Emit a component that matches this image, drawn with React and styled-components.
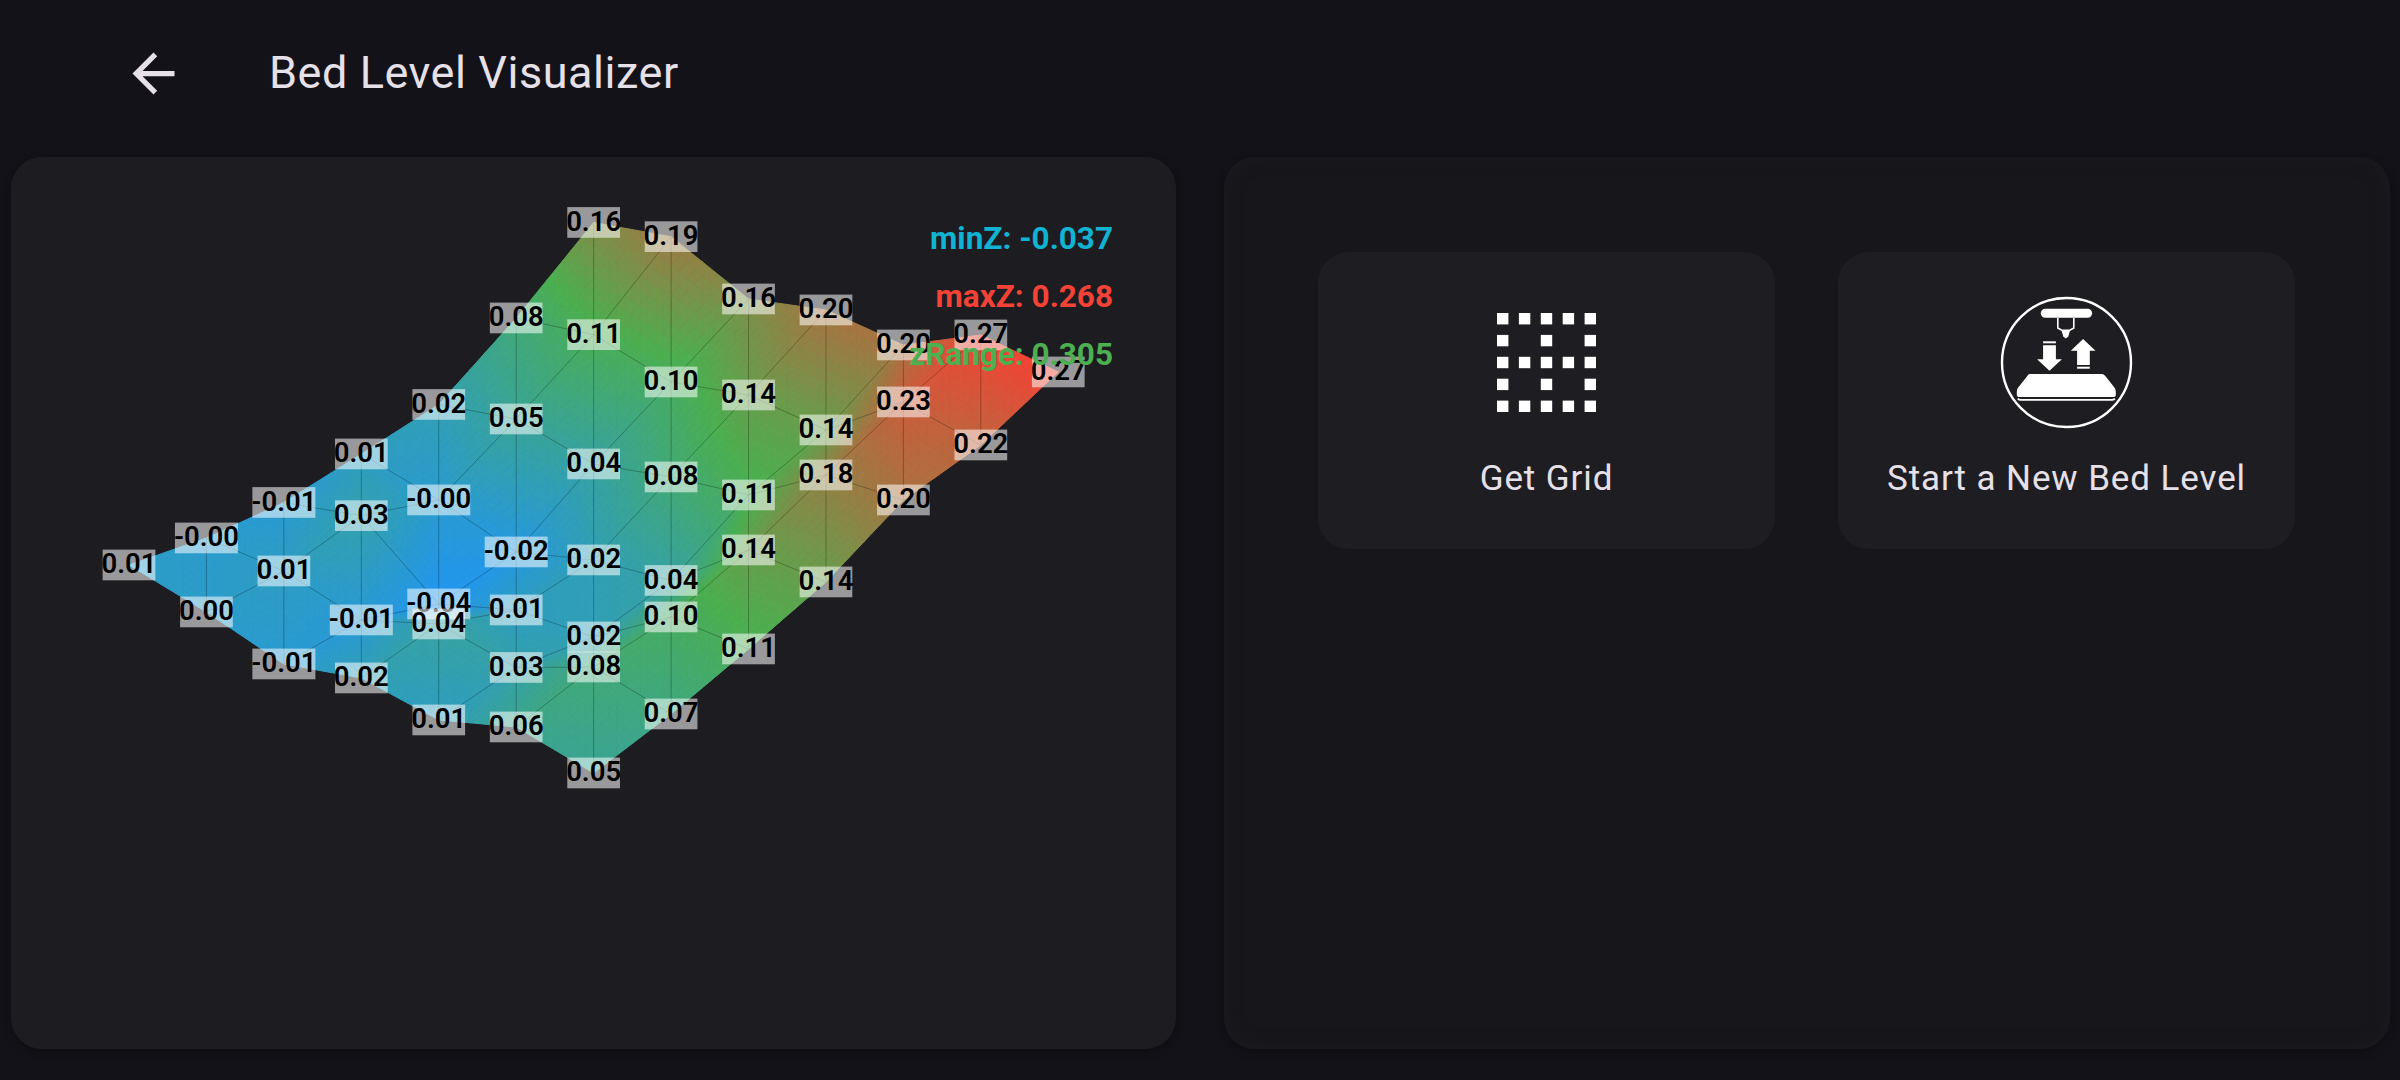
import React from 'react'
import styled, { createGlobalStyle } from 'styled-components'

const GlobalStyle = createGlobalStyle`
  html, body {
    margin: 0;
    padding: 0;
    background: #131218;
  }
`

// mesh labels per screen column, top to bottom: [y, z, label]
const COL_X0 = 129
const COL_STEP = 77.44
const COLUMNS = [
  [[565, 0.006, '0.01']],
  [[538, -0.002, '-0.00'], [612, 0.002, '0.00']],
  [[502.5, -0.008, '-0.01'], [571, 0.008, '0.01'], [664, -0.006, '-0.01']],
  [[454, 0.01, '0.01'], [515.7, 0.03, '0.03'], [620, -0.01, '-0.01'], [678, 0.02, '0.02']],
  [[404.5, 0.02, '0.02'], [500, -0.004, '-0.00'], [604, -0.037, '-0.04'], [624, 0.04, '0.04'], [720, 0.01, '0.01']],
  [[318, 0.08, '0.08'], [419, 0.05, '0.05'], [552, -0.02, '-0.02'], [610, 0.01, '0.01'], [667.5, 0.03, '0.03'], [727, 0.06, '0.06']],
  [[222.5, 0.164, '0.16'], [334.7, 0.11, '0.11'], [464, 0.04, '0.04'], [560, 0.02, '0.02'], [637, 0.02, '0.02'], [667, 0.08, '0.08'], [773, 0.05, '0.05']],
  [[236.7, 0.19, '0.19'], [382, 0.1, '0.10'], [477, 0.08, '0.08'], [580.5, 0.04, '0.04'], [617, 0.1, '0.10'], [714, 0.07, '0.07']],
  [[299, 0.16, '0.16'], [395, 0.14, '0.14'], [495, 0.11, '0.11'], [550, 0.14, '0.14'], [649, 0.11, '0.11']],
  [[310, 0.2, '0.20'], [430, 0.14, '0.14'], [475, 0.18, '0.18'], [582, 0.14, '0.14']],
  [[345, 0.2, '0.20'], [402, 0.23, '0.23'], [500, 0.2, '0.20']],
  [[335, 0.266, '0.27'], [445, 0.22, '0.22']],
  [[372, 0.268, '0.27']],
]

const MIN_Z = -0.037
const MAX_Z = 0.268
const BLUE = [33, 150, 243]
const GREEN = [76, 175, 80]
const RED = [244, 67, 54]

const mix = (a, b, t) => a.map((v, i) => v + (b[i] - v) * t)

const zColor = (z) => {
  const t = Math.min(1, Math.max(0, (z - MIN_Z) / (MAX_Z - MIN_Z)))
  const c = t < 0.5 ? mix(BLUE, GREEN, t * 2) : mix(GREEN, RED, (t - 0.5) * 2)
  return `rgb(${c.map(Math.round).join(',')})`
}

// a goes up-right, b goes down-right
const grid = Array.from({ length: 7 }, () => [])
const labels = []
COLUMNS.forEach((col, c) => {
  col.forEach(([y, z, text], k) => {
    const b = k + Math.max(0, c - 6)
    const a = c - b
    const point = { x: COL_X0 + COL_STEP * c, y, z, text }
    grid[a][b] = point
    labels.push(point)
  })
})

const SUBDIV = 10

const shadeTriangle = (p, q, r) => {
  const at = (i, j) => {
    const u = i / SUBDIV
    const v = j / SUBDIV
    const w = 1 - u - v
    return {
      x: p.x * w + q.x * u + r.x * v,
      y: p.y * w + q.y * u + r.y * v,
      z: p.z * w + q.z * u + r.z * v,
    }
  }
  const out = []
  const push = (s1, s2, s3) => {
    out.push({
      points: [s1, s2, s3].map((s) => `${s.x.toFixed(1)},${s.y.toFixed(1)}`).join(' '),
      color: zColor((s1.z + s2.z + s3.z) / 3),
    })
  }
  for (let i = 0; i < SUBDIV; i++) {
    for (let j = 0; j < SUBDIV - i; j++) {
      push(at(i, j), at(i + 1, j), at(i, j + 1))
      if (i + j < SUBDIV - 1) push(at(i + 1, j), at(i + 1, j + 1), at(i, j + 1))
    }
  }
  return out
}

const facets = []
const edges = []
for (let a = 0; a < 7; a++) {
  for (let b = 0; b < 7; b++) {
    // the outline of the mesh has no visible line
    if (a < 6 && b > 0 && b < 6) edges.push([grid[a][b], grid[a + 1][b]])
    if (b < 6 && a > 0 && a < 6) edges.push([grid[a][b], grid[a][b + 1]])
    if (a < 6 && b < 6) {
      edges.push([grid[a + 1][b], grid[a][b + 1]])
      facets.push(...shadeTriangle(grid[a][b], grid[a + 1][b], grid[a][b + 1]))
      facets.push(...shadeTriangle(grid[a + 1][b + 1], grid[a + 1][b], grid[a][b + 1]))
    }
  }
}

const BedMesh = () => (
  <MeshSvg viewBox="11 157 1165 892">
    {facets.map((f, i) => (
      <polygon key={i} points={f.points} fill={f.color} stroke={f.color} strokeWidth="1" />
    ))}
    {edges.map(([p, q], i) => (
      <line key={i} x1={p.x} y1={p.y} x2={q.x} y2={q.y} stroke="rgba(0,0,0,0.25)" strokeWidth="1" />
    ))}
    {labels.map((l, i) => {
      const w = l.text.startsWith('-') ? 63 : 52.7
      return (
        <g key={i}>
          <rect x={l.x - w / 2} y={l.y - 15.4} width={w} height={30.7} fill="rgba(255,255,255,0.55)" />
          <MeshLabel x={l.x} y={l.y + 8} textAnchor="middle">{l.text}</MeshLabel>
        </g>
      )
    })}
  </MeshSvg>
)

const GRID_DOTS = [
  [1, 1, 1, 1, 1],
  [1, 0, 1, 0, 1],
  [1, 1, 1, 1, 1],
  [1, 0, 1, 0, 1],
  [1, 1, 1, 1, 1],
]

const GridIcon = () => (
  <svg width="99" height="99" viewBox="0 0 99 99">
    {GRID_DOTS.map((row, r) =>
      row.map((on, c) =>
        on ? <rect key={`${r}-${c}`} x={c * 21.9} y={r * 21.9} width="11.4" height="11.4" fill="#fff" /> : null
      )
    )}
  </svg>
)

const PrinterIcon = () => (
  <svg width="135" height="135" viewBox="39.2 15 135 135" fill="#fff">
    <circle cx="106.7" cy="82.5" r="64.5" fill="none" stroke="#fff" strokeWidth="2.4" />
    <rect x="81" y="28.7" width="51.3" height="9" rx="4.5" />
    <path d="M98 38v10l4 2.2h8l4-2.2V38" fill="none" stroke="#fff" strokeWidth="1.6" />
    <path d="M101.7 50.5h8.6l-1.8 6-2.5 2-2.5-2z" />
    <rect x="83.3" y="61.3" width="12.8" height="2" />
    <path d="M83.3 65.2h12.8v14.1h6L89.7 90.7 77.3 79.3h6z" />
    <path d="M123.3 59l12.4 11.7h-5.7V85h-12.7V70.7H111z" />
    <rect x="117.3" y="86.7" width="12.7" height="2" />
    <path d="M70 94h72q2 0 3.5 2L155 108q1 2 1 4v3q0 2-3 2H60q-3 0-3-2v-3q0-2 1-4l9.5-12q1-2 2.5-2z" />
    <path d="M58 118.6q1 1.2 3 1.2h91q2 0 3-1.2" fill="none" stroke="#fff" strokeWidth="1.8" />
  </svg>
)

export default function App() {
  return (
    <Page>
      <GlobalStyle />
      <Header>
        <BackButton aria-label="Back">
          <svg width="63" height="63" viewBox="0 0 24 24" fill="#e6e0e9">
            <path d="M20 11H7.83l5.59-5.59L12 4l-8 8 8 8 1.41-1.41L7.83 13H20v-2z" />
          </svg>
        </BackButton>
        <Title>Bed Level Visualizer</Title>
      </Header>
      <Panels>
        <ChartPanel>
          <BedMesh />
          <Legend>
            <LegendItem color="#10b3d2">minZ: -0.037</LegendItem>
            <LegendItem color="#f44336">maxZ: 0.268</LegendItem>
            <LegendItem color="#4caf50">zRange: 0.305</LegendItem>
          </Legend>
        </ChartPanel>
        <ActionsPanel>
          <ActionCard>
            <CardIcon><GridIcon /></CardIcon>
            <CardLabel>Get Grid</CardLabel>
          </ActionCard>
          <ActionCard>
            <CardIcon><PrinterIcon /></CardIcon>
            <CardLabel>Start a New Bed Level</CardLabel>
          </ActionCard>
        </ActionsPanel>
      </Panels>
    </Page>
  )
}

const Page = styled.div`
  display: flex;
  flex-direction: column;
  width: 2400px;
  height: 1080px;
  overflow: hidden;
  background: #131218;
  color: #e6e0e9;
  font-family: Roboto, 'Liberation Sans', sans-serif;
`

const Header = styled.header`
  display: flex;
  align-items: center;
  flex: 0 0 146px;
  padding: 0 0 0 122px;
`

const BackButton = styled.button`
  display: flex;
  padding: 0;
  border: none;
  background: none;
  cursor: pointer;
`

const Title = styled.h1`
  margin: 0 0 0 84px;
  font-size: 45px;
  font-weight: 400;
  line-height: 1.2;
  letter-spacing: 0.55px;
`

const Panels = styled.main`
  display: grid;
  grid-template-columns: 1165px 1166px;
  column-gap: 48px;
  height: 892px;
  margin-top: 11px;
  padding-left: 11px;
`

const ChartPanel = styled.section`
  position: relative;
  overflow: hidden;
  border-radius: 31px;
  background: #1d1c20;
  box-shadow: 0 3px 8px rgba(0, 0, 0, 0.3);
`

const MeshSvg = styled.svg`
  display: block;
  width: 100%;
  height: 100%;
`

const MeshLabel = styled.text`
  font-family: Roboto, 'Liberation Sans', sans-serif;
  font-size: 27.5px;
  font-weight: 600;
  fill: #000;
`

const Legend = styled.div`
  position: absolute;
  top: 61px;
  right: 63px;
  display: flex;
  flex-direction: column;
  align-items: flex-end;
  row-gap: 16px;
`

const LegendItem = styled.div`
  font-size: 31.5px;
  font-weight: 700;
  line-height: 42px;
  color: ${(props) => props.color};
`

const ActionsPanel = styled.section`
  display: grid;
  grid-template-columns: 457px 457px;
  column-gap: 63px;
  align-content: start;
  padding: 95px 94px;
  border-radius: 31px;
  background: #17161b;
  box-shadow: 0 3px 8px rgba(0, 0, 0, 0.3), inset 0 0 16px 2px #1b1a1f;
`

const ActionCard = styled.button`
  display: flex;
  flex-direction: column;
  align-items: center;
  height: 297px;
  padding: 45px 0 0;
  border: none;
  border-radius: 31px;
  background: #1e1d21;
  color: #e6e0e9;
  font-family: inherit;
  cursor: pointer;
`

const CardIcon = styled.div`
  display: flex;
  align-items: center;
  justify-content: center;
  height: 131px;
`

const CardLabel = styled.span`
  margin-top: 29px;
  font-size: 35px;
  line-height: 44px;
  letter-spacing: 0.9px;
`
